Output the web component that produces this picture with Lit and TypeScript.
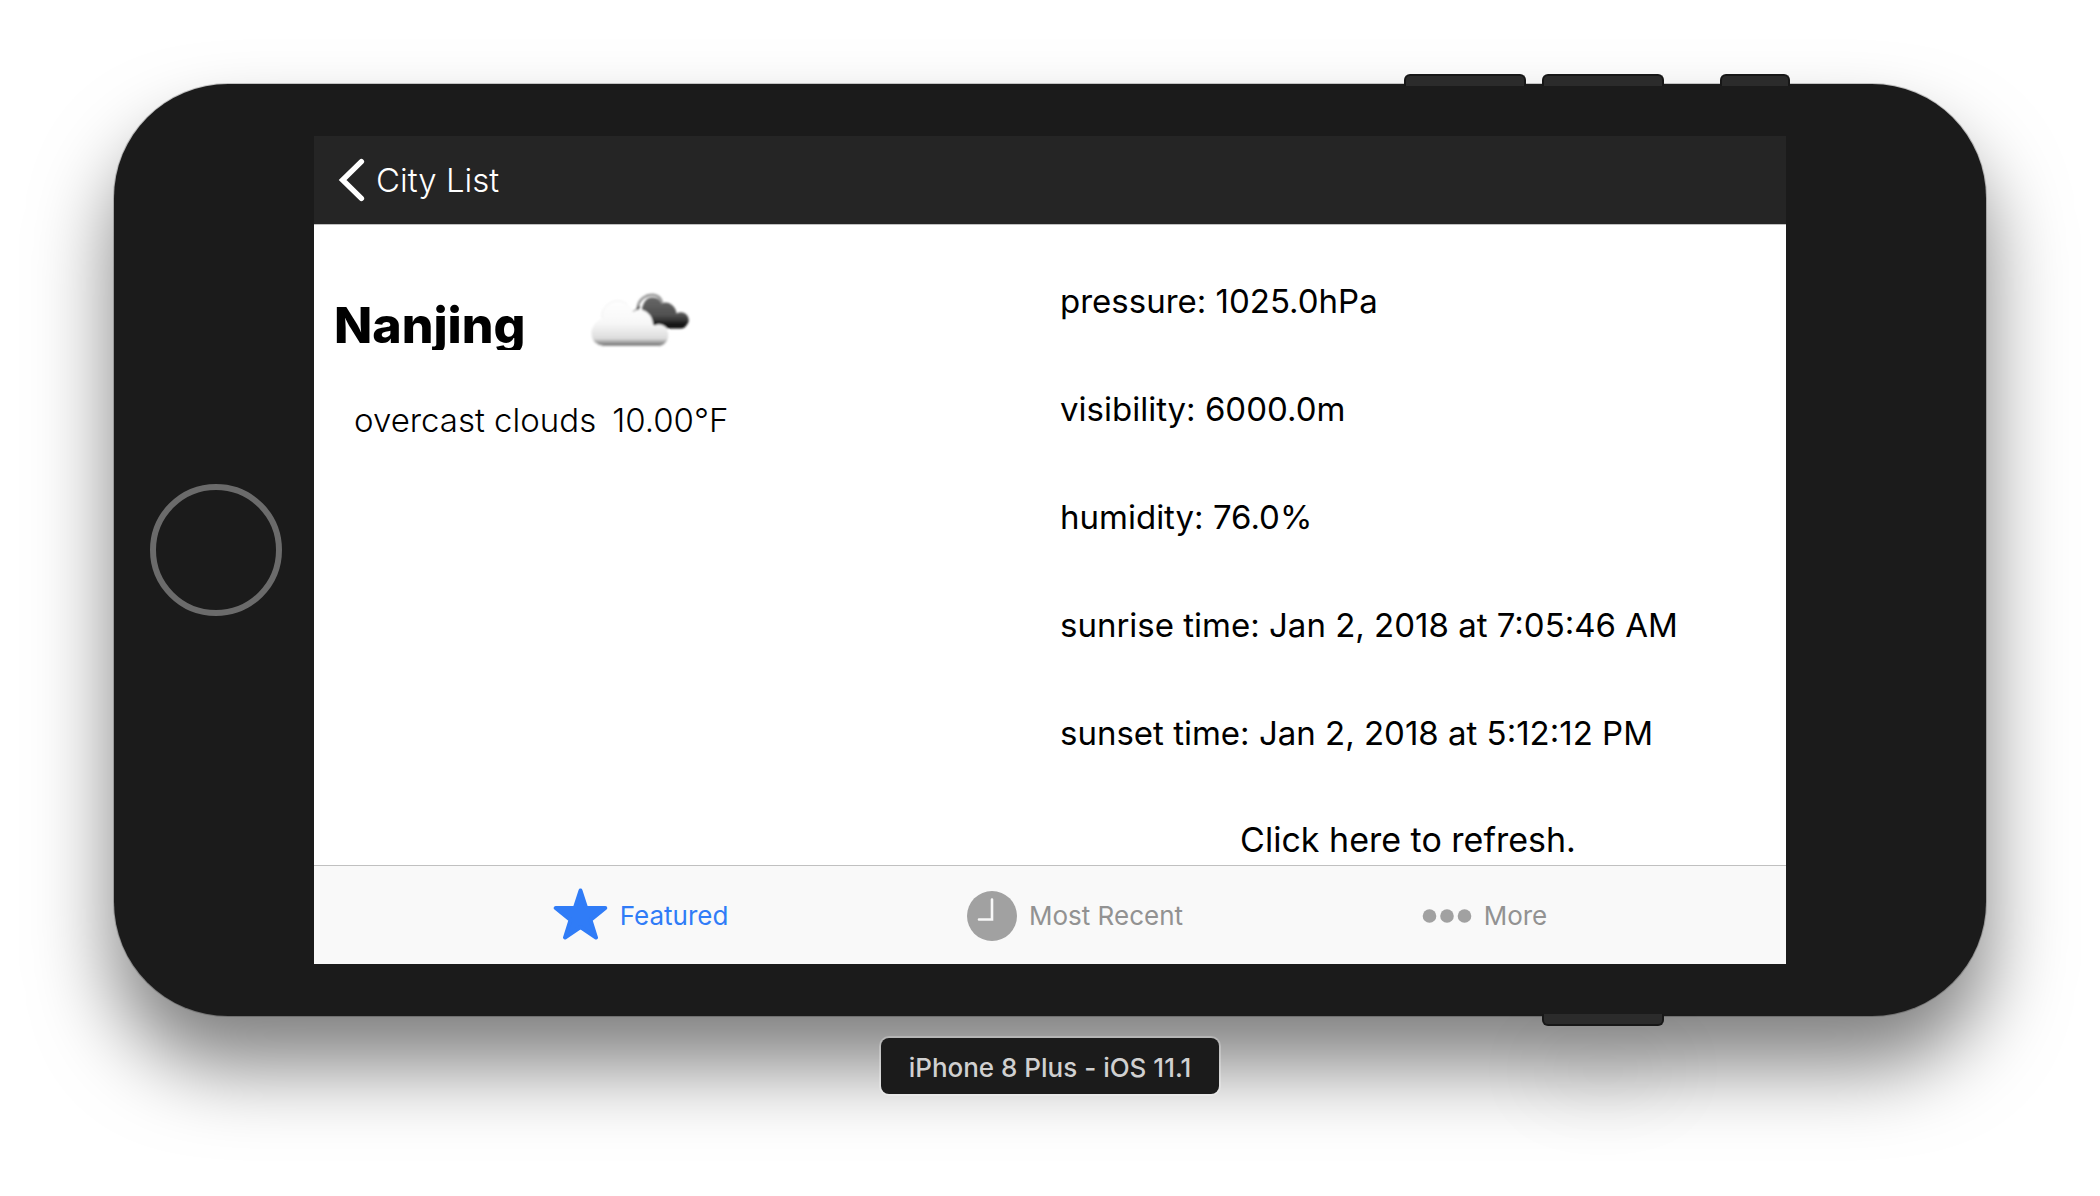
import { LitElement, html, svg, css } from "lit";
import { customElement, property, state } from "lit/decorators.js";

const starIcon = svg`<path d="M27.5 2.5 L33.2 20 L52.3 20 L37.5 32 L43 49.5 L27.5 39.2 L12 49.5 L17.5 32 L2.700 20 L21.8 20 Z"
  fill="currentColor" stroke="currentColor" stroke-width="4" stroke-linejoin="round"/>`;

const clockIcon = svg`<circle cx="25" cy="25" r="25" fill="#a1a1a1"/>
  <path d="M25 8.5 V28.5 H12" fill="none" stroke="#f8f8f8" stroke-width="2.6" stroke-linecap="round" stroke-linejoin="miter"/>`;

const moreIcon = svg`<g fill="#a1a1a1"><circle cx="7.5" cy="25" r="6.8"/><circle cx="25" cy="25" r="6.8"/><circle cx="42.5" cy="25" r="6.8"/></g>`;

const tabs = [
  { id: "featured", label: "Featured", width: 55, height: 56, icon: starIcon },
  { id: "recent", label: "Most Recent", width: 50, height: 50, icon: clockIcon },
  { id: "more", label: "More", width: 50, height: 50, icon: moreIcon },
];

const details = [
  "pressure: 1025.0hPa",
  "visibility: 6000.0m",
  "humidity: 76.0%",
  "sunrise time: Jan 2, 2018 at 7:05:46 AM",
  "sunset time: Jan 2, 2018 at 5:12:12 PM",
];

@customElement("tab-bar")
class TabBar extends LitElement {
  @state() private active = "featured";

  static styles = css`
    :host {
      display: block;
    }
    .bar {
      display: flex;
      justify-content: space-evenly;
      align-items: center;
      box-sizing: border-box;
      height: 99px;
      padding-top: 2px;
      background: #f9f9f9;
      border-top: 1px solid #c0c0c0;
    }
    .tab {
      display: flex;
      align-items: center;
      gap: 12px;
      padding: 0;
      border: 0;
      background: none;
      color: #929292;
      font: inherit;
      font-size: 26px;
      line-height: 40px;
    }
    .tab.active {
      color: #307cf7;
    }
    .icon {
      display: block;
    }
  `;

  render() {
    return html`<nav class="bar">
      ${tabs.map(
        (t) => html`<button class="tab ${t.id === this.active ? "active" : ""}" @click=${() => (this.active = t.id)}>
          <svg class="icon" width=${t.width} height=${t.height} viewBox="0 0 ${t.width} ${t.height}" aria-hidden="true">${t.icon}</svg>
          <span>${t.label}</span>
        </button>`
      )}
    </nav>`;
  }
}

@customElement("weather-detail")
class WeatherDetail extends LitElement {
  @property() city = "";
  @property() condition = "";
  @property() temperature = "";

  static styles = css`
    :host {
      display: block;
      background: #fff;
      color: #000;
    }
    .nav {
      display: flex;
      align-items: center;
      height: 88px;
      padding: 0 24px;
      background: #252525;
      border-bottom: 1px solid #c0c0c0;
    }
    .back {
      display: flex;
      align-items: center;
      gap: 10px;
      color: #fff;
      text-decoration: none;
      font-size: 33px;
      font-weight: 300;
      line-height: 40px;
    }
    .chevron,
    .weather {
      display: block;
    }
    .content {
      display: grid;
      grid-template-columns: 1fr 1fr;
      gap: 30px;
      padding: 56px 30px 6px 20px;
    }
    .heading {
      display: grid;
      grid-template-columns: 240px auto;
      justify-content: start;
      align-items: end;
      gap: 16px;
    }
    .city {
      margin: 0;
      overflow: hidden;
      font-size: 50px;
      font-weight: 800;
      line-height: 50px;
    }
    .summary {
      display: flex;
      gap: 16px;
      margin: 50px 0 0;
      padding-left: 20px;
      font-size: 33px;
      font-weight: 300;
      line-height: 40px;
    }
    .details {
      display: flex;
      flex-direction: column;
      gap: 68px;
      font-size: 33px;
      line-height: 40px;
    }
    .line {
      margin: 0;
      white-space: nowrap;
    }
    .refresh {
      padding: 0;
      border: 0;
      background: none;
      color: #000;
      font: inherit;
      font-size: 34px;
      line-height: 38px;
    }
  `;

  render() {
    return html`
      <header class="nav">
        <a class="back" href="#cities">
          <svg class="chevron" width="28" height="44" viewBox="0 0 28 44" aria-hidden="true">
            <path d="M23.4 3.6 L4.6 22 L23.4 40.4" fill="none" stroke="#fff" stroke-width="5.4" stroke-linecap="round" stroke-linejoin="miter" />
          </svg>
          <span>City List</span>
        </a>
      </header>
      <main class="content">
        <section>
          <div class="heading">
            <h1 class="city">${this.city}</h1>
            <svg class="weather" width="104" height="69" viewBox="0 0 104 69" role="img" aria-label=${this.condition}>
              <defs>
                <linearGradient id="front" x1="0" y1="19" x2="0" y2="66" gradientUnits="userSpaceOnUse">
                  <stop offset="0" stop-color="#ffffff" />
                  <stop offset="0.5" stop-color="#f7f7f7" />
                  <stop offset="0.82" stop-color="#dcdcdc" />
                  <stop offset="0.9" stop-color="#a0a0a0" />
                  <stop offset="1" stop-color="#626262" />
                </linearGradient>
                <linearGradient id="rear" x1="0" y1="14" x2="0" y2="48" gradientUnits="userSpaceOnUse">
                  <stop offset="0" stop-color="#6a6a6a" />
                  <stop offset="0.6" stop-color="#505050" />
                  <stop offset="0.85" stop-color="#1c1c1c" />
                  <stop offset="1" stop-color="#000000" />
                </linearGradient>
                <filter id="soft" x="-10%" y="-10%" width="120%" height="120%">
                  <feGaussianBlur stdDeviation="0.8" />
                </filter>
              </defs>
              <g filter="url(#soft)">
                <path d="M48 29 Q47 22 53 17 Q60 12 67 15 Q71 17 72 22" fill="none" stroke="#9a9a9a" stroke-width="2.6" />
                <path d="M43 31 Q48 30 49 25" fill="none" stroke="#555" stroke-width="2.4" />
                <path d="M51.500 31 Q53 17 62 16.500 Q69 16 71.500 22.500 Q77 20 82 24 Q86 27 86.500 32.500 Q93 29.500 97 34 Q101 40 96 45 Q94 47.500 91 47.500 H68 L58 40 Z" fill="url(#rear)" />
                <path d="M14 65.500 Q2 64 1 53 Q1 44 11.500 39 Q11 29 17 24 Q27 16 37 23 Q41 26 42.500 31.500 Q51 26 58.500 33 Q63 38 62.500 46 Q69 41.500 75 46 Q81 52 77.500 59.500 Q74 65.500 68 65.500 Z"
                  fill="url(#front)" stroke="#fbfbfb" stroke-width="1" />
                <path d="M11 39 Q1 45 1.500 54 M12 37 Q11 29 17 24 Q27 16 37 23" fill="none" stroke="#f0f0f0" stroke-width="1" />
              </g>
            </svg>
          </div>
          <p class="summary"><span>${this.condition}</span><span>${this.temperature}</span></p>
        </section>
        <section class="details">
          ${details.map((d) => html`<p class="line">${d}</p>`)}
          <button class="refresh">Click here to refresh.</button>
        </section>
      </main>
      <tab-bar></tab-bar>
    `;
  }
}

@customElement("app-root")
class AppRoot extends LitElement {
  static styles = css`
    :host {
      display: block;
      box-sizing: border-box;
      min-height: 100vh;
      padding: 74px 114px 0;
      overflow: hidden;
      background: #fff;
      font-family: Inter, "Liberation Sans", sans-serif;
    }
    .keys {
      position: relative;
      z-index: 1;
      display: flex;
      justify-content: flex-end;
      gap: 16px;
    }
    .keys.top {
      padding-right: 196px;
      margin-bottom: -2px;
    }
    .keys.bottom {
      padding-right: 322px;
      margin-top: -2px;
    }
    .key {
      box-sizing: border-box;
      width: 122px;
      height: 12px;
      background: #2b2b2b;
      border: 2px solid #171717;
    }
    .top .key {
      border-bottom: 0;
      border-radius: 6px 6px 0 0;
    }
    .bottom .key {
      border-top: 0;
      border-radius: 0 0 6px 6px;
      box-shadow: 0 50px 80px rgba(0, 0, 0, 0.3);
      clip-path: inset(0 -200px -200px);
    }
    .key.power {
      width: 70px;
      margin-left: 40px;
    }
    .phone {
      display: grid;
      grid-template-columns: 200px 1fr 200px;
      align-items: center;
      padding: 52px 0;
      border-radius: 114px;
      background: #1b1b1b;
      box-shadow: 0 0 0 1px rgba(0, 0, 0, 0.2), 0 50px 80px rgba(0, 0, 0, 0.5);
    }
    .home {
      box-sizing: border-box;
      width: 132px;
      height: 132px;
      margin-left: 36px;
      padding: 0;
      border: 6px solid #6b6b6b;
      border-radius: 50%;
      background: none;
    }
    .caption {
      position: relative;
      z-index: 1;
      width: fit-content;
      margin: 12px auto 0;
      padding: 10px 28px 6px;
      border-radius: 8px;
      background: #1b1b1b;
      box-shadow: 0 0 0 2px rgba(255, 255, 255, 0.25);
      color: #d0d0d0;
      font-size: 26px;
      font-weight: 500;
      line-height: 40px;
    }
  `;

  render() {
    return html`
      <div class="keys top">
        <span class="key"></span><span class="key"></span><span class="key power"></span>
      </div>
      <div class="phone">
        <button class="home" aria-label="Home"></button>
        <weather-detail city="Nanjing" condition="overcast clouds" temperature="10.00°F"></weather-detail>
      </div>
      <div class="keys bottom"><span class="key"></span></div>
      <div class="caption">iPhone 8 Plus - iOS 11.1</div>
    `;
  }
}
